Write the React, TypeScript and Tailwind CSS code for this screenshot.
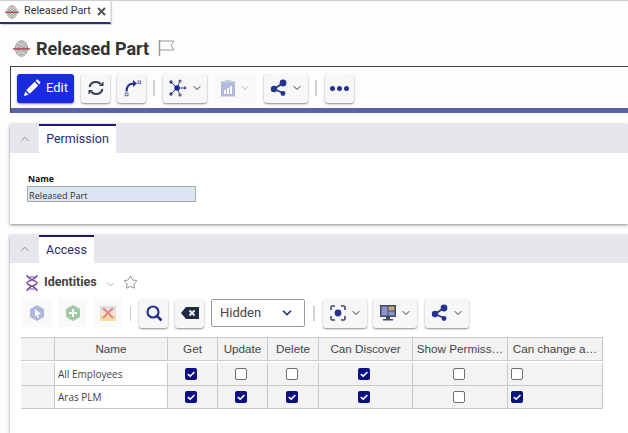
import { ChevronDown, ChevronUp, Star } from "lucide-react"

const columns = [
  { label: "", width: "w-[34px]" },
  { label: "Name", width: "w-[113px]" },
  { label: "Get", width: "w-[50px]" },
  { label: "Update", width: "w-[50px]" },
  { label: "Delete", width: "w-[51px]" },
  { label: "Can Discover", width: "w-[94px]" },
  { label: "Show Permiss…", width: "w-[95px]" },
  { label: "Can change a…", width: "w-[95px]" },
]

const rows = [
  { name: "All Employees", checks: [true, false, false, true, false, false] },
  { name: "Aras PLM", checks: [true, true, true, true, false, true] },
]

const checkWidths = ["w-[50px]", "w-[50px]", "w-[51px]", "w-[94px]", "w-[95px]", "w-[95px]"]

function Fingerprint({ size }: { size: number }) {
  return (
    <svg width={size} height={size} viewBox="0 0 16 16" fill="none" className="shrink-0">
      <g stroke="#6f6f6f" strokeWidth="0.7">
        <ellipse cx="8" cy="8" rx="5.8" ry="7.3" />
        <ellipse cx="8" cy="8" rx="4.5" ry="6" />
        <ellipse cx="8" cy="8" rx="3.2" ry="4.6" />
        <ellipse cx="8" cy="8" rx="2" ry="3.2" />
        <ellipse cx="8" cy="8" rx="0.8" ry="1.8" />
      </g>
      <rect x="0" y="7.6" width="16" height="1.5" fill="#b0505a" />
    </svg>
  )
}

function ToolButton({ children, wide }: { children: React.ReactNode; wide?: boolean }) {
  return (
    <div
      className={`flex h-[29px] items-center justify-center gap-[3px] rounded-[3px] bg-[#f7f7f7] shadow-[0_1px_2px_rgba(0,0,0,0.45)] ${
        wide ? "w-[44px]" : "w-[29px]"
      }`}
    >
      {children}
    </div>
  )
}

function Caret({ light }: { light?: boolean }) {
  return <ChevronDown size={12} strokeWidth={2} className={light ? "text-[#b5b5b5]" : "text-[#333]"} />
}

function Divider() {
  return <div className="ml-[7px] mr-[8px] h-[16px] w-[2px] bg-[#cfcfcf]" />
}

function HubIcon() {
  return (
    <svg width="20" height="20" viewBox="0 0 20 20">
      <g stroke="#3d4a7a" strokeWidth="1">
        <line x1="9" y1="10" x2="3" y2="4" />
        <line x1="9" y1="10" x2="3" y2="16" />
        <line x1="9" y1="10" x2="12" y2="3" />
        <line x1="9" y1="10" x2="12" y2="17" />
        <line x1="9" y1="10" x2="17" y2="10" />
      </g>
      <circle cx="9" cy="10" r="2.8" fill="#1f2a8a" />
      <circle cx="3" cy="4" r="1.7" fill="#3c4668" />
      <circle cx="3" cy="16" r="1.7" fill="#3c4668" />
      <circle cx="12" cy="3" r="1.6" fill="#5a6488" />
      <circle cx="12" cy="17" r="1.6" fill="#5a6488" />
      <circle cx="17" cy="10" r="1.4" fill="#4a55a0" />
    </svg>
  )
}

function ShareIcon() {
  return (
    <svg width="18" height="18" viewBox="0 0 18 18">
      <line x1="4" y1="10" x2="13" y2="4" stroke="#25338a" strokeWidth="1.6" />
      <line x1="4" y1="10" x2="13" y2="14" stroke="#25338a" strokeWidth="1.6" />
      <circle cx="4" cy="10" r="3.2" fill="#25338a" />
      <circle cx="13" cy="4" r="3.4" fill="#25338a" />
      <circle cx="13" cy="14.5" r="2.4" fill="#25338a" />
    </svg>
  )
}

function Checkbox({ checked }: { checked: boolean }) {
  if (checked) {
    return (
      <div className="flex h-[12px] w-[12px] items-center justify-center rounded-[2px] bg-[#0b0f82]">
        <svg width="10" height="10" viewBox="0 0 10 10" fill="none">
          <path d="M1.8 5.2 L4.2 7.2 L8.4 3" stroke="white" strokeWidth="1.6" />
        </svg>
      </div>
    )
  }
  return <div className="h-[12px] w-[12px] rounded-[2px] border border-[#6f6f6f] bg-white" />
}

function SectionHeader({ title, tabWidth, height }: { title: string; tabWidth: string; height: string }) {
  return (
    <div className={`flex bg-[#e6e7ec] ${height}`}>
      <div className="flex w-[29px] items-center justify-center pl-[1px]">
        <ChevronUp size={14} strokeWidth={1.5} className="text-[#888]" />
      </div>
      <div
        className={`flex items-center justify-center border-t-2 border-[#1d1a6e] bg-white text-[12.5px] text-[#2c2a72] ${tabWidth}`}
      >
        {title}
      </div>
    </div>
  )
}

export default function App() {
  return (
    <div className="h-[433px] w-[628px] overflow-hidden bg-[#fdfdfd] font-['Roboto',sans-serif]">
      {/* Tab strip */}
      <div className="h-[24px] border-t border-[#cfcfcf]">
        <div className="flex h-[23px] w-[111px] items-center border-b-2 border-r border-b-[#2c3070] border-r-[#e2e2e2] bg-white pl-[5px] text-[#333] shadow-[1px_1px_1px_rgba(0,0,0,0.15)]">
          <Fingerprint size={14} />
          <span className="ml-[5px] whitespace-nowrap text-[10.8px]">Released Part</span>
          <svg className="ml-[6px] shrink-0" width="9" height="9" viewBox="0 0 9 9" stroke="#555" strokeWidth="2">
            <path d="M1 1L8 8M8 1L1 8" />
          </svg>
        </div>
      </div>

      {/* Title */}
      <div className="flex h-[42px] items-center pl-[13px] pt-[6px]">
        <Fingerprint size={17} />
        <h1 className="ml-[6px] text-[18px] font-bold text-[#333]">Released Part</h1>
        <svg className="ml-[9px]" width="18" height="18" viewBox="0 0 18 18" fill="none" stroke="#9a9a9a" strokeWidth="1">
          <path d="M1.5 1V17" strokeWidth="1.5" />
          <path d="M2 2H16L13 6.5L16 11H2" />
        </svg>
      </div>

      {/* Toolbar */}
      <div className="ml-[10px] border-l border-t border-[#444]">
        <div className="flex h-[41px] items-center pl-[6px] pt-[1px]">
          <div className="flex h-[29px] w-[57px] items-center justify-center gap-[5px] rounded-[3px] bg-[#1a2ae0] text-[13px] text-white shadow-[0_1px_2px_rgba(0,0,0,0.45)]">
            <svg width="18" height="18" viewBox="0 0 18 18" fill="white">
              <path d="M1 17L2.2 12.4L5.6 15.8Z" />
              <path d="M3.2 11.2L11.6 2.8L15.2 6.4L6.8 14.8Z" />
              <path d="M12.6 1.8L13.6 0.9C14.1 0.5 14.7 0.5 15.2 0.9L17.1 2.8C17.5 3.3 17.5 3.9 17.1 4.4L16.2 5.4Z" />
            </svg>
            <span>Edit</span>
          </div>
          <div className="ml-[7px]">
            <ToolButton>
              <svg width="18" height="18" viewBox="0 0 18 18" fill="none" stroke="#333c5c" strokeWidth="2">
                <path d="M2.5 8C3.2 5 5.8 3 9 3C11 3 12.6 3.8 13.8 5" />
                <path d="M15.5 10C14.8 13 12.2 15 9 15C7 15 5.4 14.2 4.2 13" />
                <path d="M16.5 2.5V7H12Z" fill="#333c5c" stroke="none" />
                <path d="M1.5 15.5V11H6Z" fill="#333c5c" stroke="none" />
              </svg>
            </ToolButton>
          </div>
          <div className="ml-[7px]">
            <ToolButton>
              <svg width="18" height="18" viewBox="0 0 18 18" fill="none">
                <path d="M3.5 12.5C3.5 7 6.5 4.5 11 4.5" stroke="#25338a" strokeWidth="2" />
                <path d="M10 1L14 4.5L10 8Z" fill="#25338a" />
                <rect x="15" y="2" width="2.6" height="2.6" stroke="#4a55a0" strokeWidth="0.8" />
                <rect x="2.2" y="14" width="2.8" height="2.8" stroke="#4a55a0" strokeWidth="0.8" />
              </svg>
            </ToolButton>
          </div>
          <Divider />
          <ToolButton wide>
            <HubIcon />
            <Caret />
          </ToolButton>
          <div className="ml-[6px] flex h-[29px] w-[44px] items-center justify-center gap-[3px] rounded-[3px] bg-[#f9f9f9]">
            <svg width="16" height="18" viewBox="0 0 16 18">
              <rect x="1" y="2.5" width="14" height="15" fill="#b4bade" />
              <rect x="5" y="1" width="6" height="3" fill="#c9cce2" />
              <rect x="4" y="11" width="2" height="4" fill="white" />
              <rect x="7" y="9" width="2" height="6" fill="white" />
              <rect x="10" y="7" width="2" height="8" fill="white" />
            </svg>
            <Caret light />
          </div>
          <div className="ml-[7px]">
            <ToolButton wide>
              <ShareIcon />
              <Caret />
            </ToolButton>
          </div>
          <Divider />
          <ToolButton>
            <div className="flex gap-[2px]">
              <span className="h-[5px] w-[5px] rounded-full bg-[#25338a]" />
              <span className="h-[5px] w-[5px] rounded-full bg-[#25338a]" />
              <span className="h-[5px] w-[5px] rounded-full bg-[#25338a]" />
            </div>
          </ToolButton>
        </div>
        <div className="h-[5px] bg-[#5b64a2]" />
      </div>

      {/* Permission */}
      <div className="ml-[10px] mt-[11px] h-[100px] bg-white shadow-[0_1px_3px_rgba(0,0,0,0.45)]">
        <SectionHeader title="Permission" tabWidth="w-[77px]" height="h-[29px]" />
        <div className="pl-[17px] pt-[20px] font-['Open_Sans',sans-serif]">
          <div className="-mt-[1px] pl-[1px] text-[8.7px] font-bold leading-[14px] text-[#111]">Name</div>
          <div className="flex h-[16px] w-[169px] items-center border border-[#a9a9a9] bg-[#dce5f3] pl-[1px] pt-[3px] text-[9.2px] text-[#333]">
            Released Part
          </div>
        </div>
      </div>

      {/* Access */}
      <div className="ml-[10px] mt-[11px] h-[198px] bg-white shadow-[0_1px_3px_rgba(0,0,0,0.45)]">
        <SectionHeader title="Access" tabWidth="w-[55px]" height="h-[28px]" />
        <div className="flex h-[35px] items-center pl-[15px] pt-[4px]">
          <svg width="14" height="18" viewBox="0 0 14 18" fill="none" stroke="#6b3f9a" strokeWidth="1.4">
            <path d="M2 1C2 6 12 6 12 9C12 12 2 12 2 17" />
            <path d="M12 1C12 6 2 6 2 9C2 12 12 12 12 17" />
            <path d="M3 3H11M3 15H11" strokeWidth="1" />
          </svg>
          <span className="ml-[5px] text-[12.5px] font-bold text-[#444]">Identities</span>
          <ChevronDown size={11} className="ml-[8px] mt-[3px] text-[#aaa]" />
          <Star size={15} strokeWidth={1} className="ml-[7px] text-[#555]" />
        </div>

        {/* Grid toolbar */}
        <div className="flex h-[30px] items-center pl-[12px]">
          <div className="flex h-[28px] w-[30px] items-center justify-center bg-[#f9f9f9]">
            <svg width="16" height="18" viewBox="0 0 16 18">
              <path d="M8 1L15 5V13L8 17L1 13V5Z" fill="#b2b8da" />
              <path d="M6 5L12 10L9 10.5L10 13.5L8.5 14L7.5 11L6 12.5Z" fill="white" />
            </svg>
          </div>
          <div className="ml-[6px] flex h-[28px] w-[29px] items-center justify-center bg-[#f9f9f9]">
            <svg width="16" height="18" viewBox="0 0 16 18">
              <path d="M8 1L15 5V13L8 17L1 13V5Z" fill="#9fc9a2" />
              <path d="M7 5H9V8H12V10H9V13H7V10H4V8H7Z" fill="white" />
            </svg>
          </div>
          <div className="ml-[7px] flex h-[28px] w-[28px] items-center justify-center bg-[#f9f9f9]">
            <svg width="20" height="18" viewBox="0 0 20 18">
              <rect x="2" y="2" width="16" height="5" fill="#e0e0e0" />
              <rect x="2" y="7" width="16" height="5" fill="#f4e0d8" />
              <rect x="2" y="12" width="16" height="5" fill="#f5dda0" />
              <path d="M5 4L15 14M15 4L5 14" stroke="#e08a80" strokeWidth="2" />
            </svg>
          </div>
          <div className="ml-[8px] mr-[8px] h-[15px] w-[1px] bg-[#cfcfcf]" />
          <ToolButton>
            <svg width="18" height="18" viewBox="0 0 18 18" fill="none" stroke="#25338a">
              <circle cx="8" cy="8" r="5.5" strokeWidth="2.2" />
              <path d="M12 12L16.5 16.5" strokeWidth="2.6" />
            </svg>
          </ToolButton>
          <div className="ml-[7px]">
            <ToolButton>
              <svg width="20" height="14" viewBox="0 0 20 14">
                <path d="M6 1H19V13H6L1 7Z" fill="#1f2a44" />
                <path d="M9.5 4.5L14.5 9.5M14.5 4.5L9.5 9.5" stroke="white" strokeWidth="1.8" />
              </svg>
            </ToolButton>
          </div>
          <div className="ml-[7px] flex h-[28px] w-[94px] items-center justify-between rounded-[2px] border border-[#9a9a9a] bg-white pl-[8px] pr-[10px] text-[13px] text-[#444]">
            <span>Hidden</span>
            <ChevronDown size={14} strokeWidth={3} className="text-[#25338a]" />
          </div>
          <div className="ml-[8px] mr-[8px] h-[15px] w-[2px] bg-[#cfcfcf]" />
          <ToolButton wide>
            <svg width="18" height="18" viewBox="0 0 18 18" fill="none" stroke="#3c4668" strokeWidth="1.6">
              <path d="M6 2H3L2 3V6M12 2H15L16 3V6M2 12V15L3 16H6M16 12V15L15 16H12" />
              <circle cx="9" cy="9" r="3.4" fill="#25338a" stroke="none" />
            </svg>
            <Caret />
          </ToolButton>
          <div className="ml-[6px]">
            <ToolButton wide>
              <svg width="18" height="18" viewBox="0 0 18 18">
                <rect x="1" y="1" width="16" height="12" fill="#3f4a6a" />
                <rect x="2.5" y="2.5" width="6" height="9" fill="#8b94c4" />
                <rect x="9.5" y="2.5" width="6" height="4" fill="#c8a878" />
                <rect x="9.5" y="7.5" width="6" height="4" fill="#8b94c4" />
                <rect x="7" y="13" width="4" height="2" fill="#3f4a6a" />
                <rect x="4" y="15" width="10" height="1.5" fill="#3f4a6a" />
              </svg>
              <Caret />
            </ToolButton>
          </div>
          <div className="ml-[8px]">
            <ToolButton wide>
              <ShareIcon />
              <Caret />
            </ToolButton>
          </div>
        </div>

        {/* Grid */}
        <div className="ml-[11px] mt-[9px] font-['Liberation_Sans',sans-serif] text-[11.7px] text-[#444]">
          <div className="flex h-[24px] w-[582px] border-y border-[#c9c9c9] bg-[#f3f3f3]">
            {columns.map((col, i) => (
              <div
                key={i}
                className={`flex items-center justify-center whitespace-nowrap border-r border-[#c9c9c9] ${col.width}`}
              >
                {col.label}
              </div>
            ))}
          </div>
          {rows.map((row, r) => (
            <div
              key={row.name}
              className={`flex h-[23px] w-[582px] border-b border-[#c9c9c9] ${r === 0 ? "mt-[2px]" : ""}`}
            >
              <div className="w-[34px] border-r border-[#c9c9c9] bg-[#f3f3f3]" />
              <div className="flex w-[113px] items-center border-r border-[#c9c9c9] bg-white pl-[3px] font-['Open_Sans',sans-serif] text-[10px]">
                {row.name}
              </div>
              {row.checks.map((checked, c) => (
                <div
                  key={c}
                  className={`flex items-center border-r border-[#c9c9c9] bg-[#f3f3f3] ${
                    c === 5 ? "pl-[3px]" : "justify-center pr-[3px]"
                  } ${checkWidths[c]}`}
                >
                  <Checkbox checked={checked} />
                </div>
              ))}
            </div>
          ))}
        </div>
      </div>
    </div>
  )
}
